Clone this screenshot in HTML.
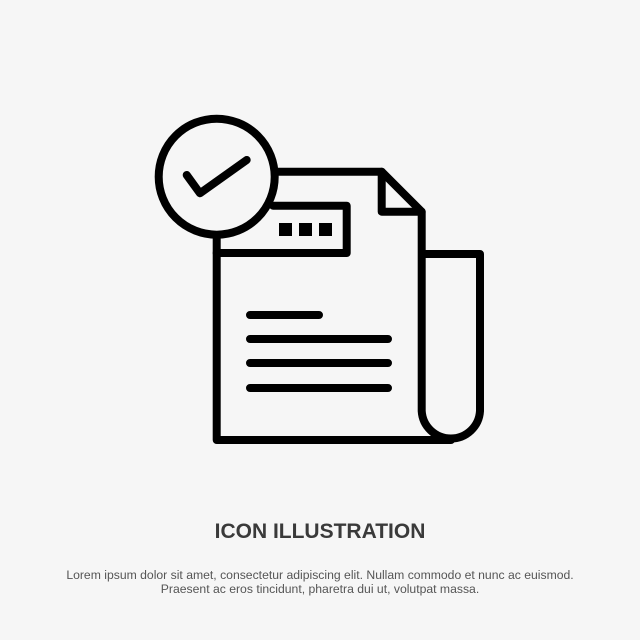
<!DOCTYPE html>
<html><head><meta charset="utf-8"><style>
html,body{margin:0;padding:0;background:#f6f6f6;width:640px;height:640px;overflow:hidden}
svg{position:absolute;left:0;top:0}
.t{position:absolute;left:0;width:640px;text-align:center;font-family:"Liberation Sans",sans-serif}
</style></head><body>
<svg width="640" height="640" viewBox="0 0 640 640" fill="none" stroke="#000" stroke-width="8" stroke-linecap="round" stroke-linejoin="round">
<path d="M275 171.7 H381.7 L421.7 211.7 V411 A29.2 29.2 0 0 0 480 411 V254 H421.7"/>
<path d="M381.7 171.7 V211.7 H421.7"/>
<path d="M216.7 236 V440 H451"/>
<path d="M216.7 253 H346.7 V205.7 H273"/>
<circle cx="216.7" cy="176.7" r="58"/>
<path d="M186.7 175 L200 193.3 L246.7 160"/>
<path d="M250 315 H319 M250 339 H388 M250 363 H388 M250 388 H388"/>
<g fill="#000" stroke="none">
<rect x="279" y="223" width="13" height="13"/><rect x="299" y="223" width="13" height="13"/><rect x="319" y="223" width="13" height="13"/>
</g>
</svg>
<div class="t" style="top:520px;font-size:21px;font-weight:bold;color:#3a3a3a">ICON ILLUSTRATION</div>
<div class="t" style="top:568px;font-size:12.2px;line-height:14px;color:#555">Lorem ipsum dolor sit amet, consectetur adipiscing elit. Nullam commodo et nunc ac euismod.<br>Praesent ac eros tincidunt, pharetra dui ut, volutpat massa.</div>
</body></html>
